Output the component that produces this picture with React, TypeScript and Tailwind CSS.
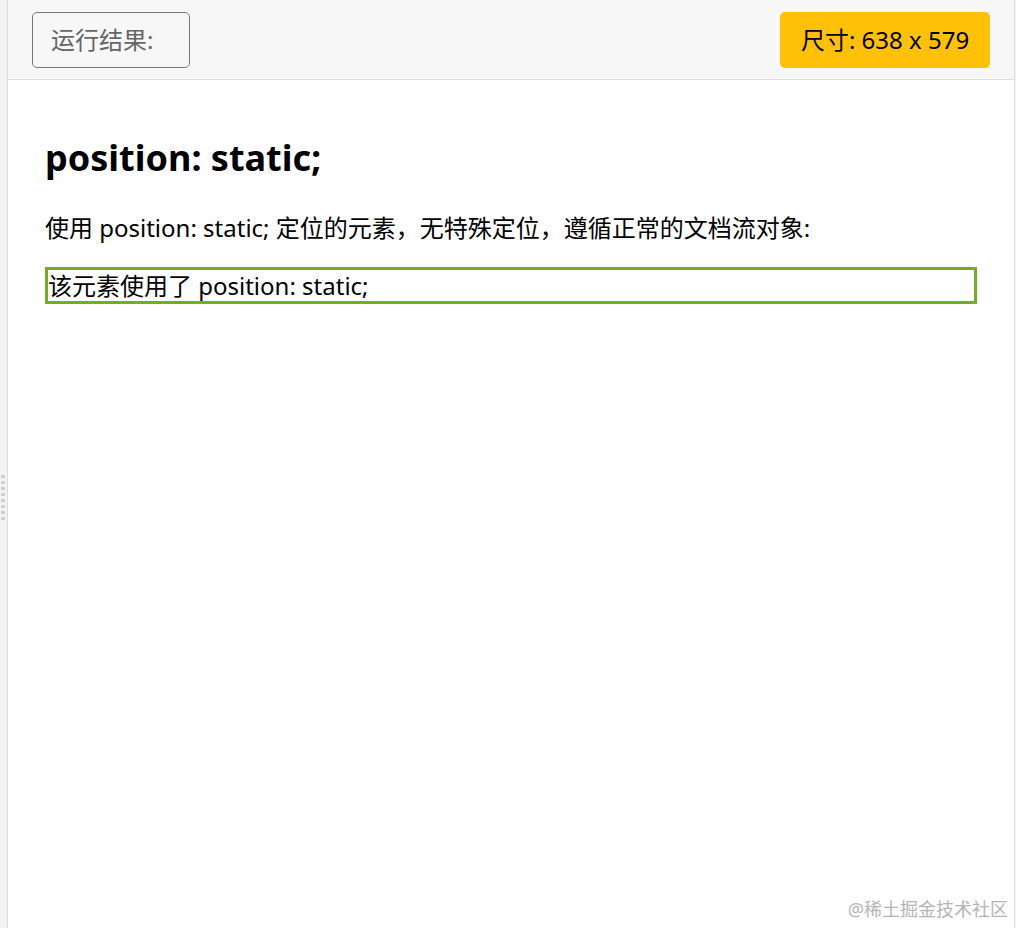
import React from 'react';

const font = { fontFamily: '"Noto Sans", "Noto Sans CJK SC", sans-serif' };

function Grip() {
  return (
    <div className="mt-[66px] flex flex-col gap-[3px] pl-[1px]">
      {Array.from({ length: 8 }).map((_, i) => (
        <div key={i} className="h-[3px] w-[4px] bg-[#cfcfcf]" />
      ))}
    </div>
  );
}

export default function App() {
  return (
    <div
      className="relative flex h-[928px] w-[1016px] overflow-hidden bg-white"
      style={font}
    >
      <div className="flex w-[8px] shrink-0 items-center border-r border-[#dcdcdc] bg-[#f3f3f3]">
        <Grip />
      </div>

      <div className="flex flex-1 flex-col border-r border-[#dcdcdc]">
        <div className="flex h-[80px] items-center justify-between border-b border-[#dcdcdc] bg-[#f7f7f7] pl-[24px] pr-[24px]">
          <div className="flex h-[56px] w-[158px] items-center rounded-[5px] border border-[#777] pl-[18px] text-[24px] text-[#666]">
            运行结果:
          </div>
          <div className="flex h-[56px] w-[210px] items-center justify-center rounded-[5px] bg-[#ffc107] text-[24px] text-black">
            尺寸: 638 x 579
          </div>
        </div>

        <div className="px-[37px] pt-[52px] text-black">
          <h1 className="text-[36px] font-bold leading-[52px]">position: static;</h1>
          <p className="mt-[27px] text-[24px] leading-[34px]">
            使用 position: static; 定位的元素，无特殊定位，遵循正常的文档流对象:
          </p>
          <div className="mt-[22px] w-[932px] border-[3px] border-[#73ad21] text-[24px] leading-[31px]">
            该元素使用了 position: static;
          </div>
        </div>
      </div>

      <div className="w-[2px] shrink-0 bg-[#f3f3f3]" />

      <div className="absolute bottom-[5px] right-[8px] text-[18px] text-[#b5b5b5]">
        @稀土掘金技术社区
      </div>
    </div>
  );
}
